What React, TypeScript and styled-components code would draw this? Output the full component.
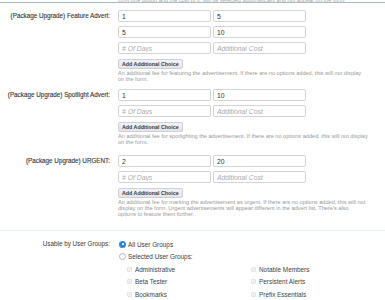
import React from 'react';
import styled, {createGlobalStyle} from 'styled-components';

const GlobalStyle = createGlobalStyle`
    body {
        margin: 0;
        background: #ffffff;
        font-family: "Liberation Sans", Arial, sans-serif;
        color: #3a3a3a;
    }
`

interface Advert {
    label: string;
    rows: [string, string][];
    desc: string;
    gapAfter: number;
}

const adverts: Advert[] = [
    {
        label: '(Package Upgrade) Feature Advert:',
        rows: [['1', '5'], ['5', '10']],
        desc: 'An additional fee for featuring the advertisement. If there are no options added, this will not display on the form.',
        gapAfter: 7,
    },
    {
        label: '(Package Upgrade) Spotlight Advert:',
        rows: [['1', '10']],
        desc: 'An additional fee for spotlighting the advertisement. If there are no options added, this will not display on the form.',
        gapAfter: 10,
    },
    {
        label: '(Package Upgrade) URGENT:',
        rows: [['2', '20']],
        desc: "An additional fee for marking the advertisement as urgent. If there are no options added, this will not display on the form. Urgent advertisements will appear different in the advert list. There's also options to feature them further.",
        gapAfter: 13,
    },
]

const groups = [
    ['Administrative', 'Notable Members'],
    ['Beta Tester', 'Persistent Alerts'],
    ['Bookmarks', 'Prefix Essentials'],
]

const App: React.FC = () => {
    return (
        <>
            <GlobalStyle/>
            <Page>
                <TopHint>
                    <span>Only one option and the cost of it, will be selected automatically and not appear on the form.</span>
                </TopHint>
                {adverts.map((a) => (
                    <FormRow key={a.label} $gapAfter={a.gapAfter}>
                        <Label>{a.label}</Label>
                        <Content>
                            <InputGrid>
                                {a.rows.map(([days, cost], i) => (
                                    <React.Fragment key={i}>
                                        <TextBox defaultValue={days}/>
                                        <TextBox defaultValue={cost}/>
                                    </React.Fragment>
                                ))}
                                <TextBox placeholder="# Of Days"/>
                                <TextBox placeholder="Additional Cost"/>
                            </InputGrid>
                            <ChoiceButton type="button">Add Additional Choice</ChoiceButton>
                            <Explain>{a.desc}</Explain>
                        </Content>
                    </FormRow>
                ))}
                <Separator/>
                <GroupRow>
                    <Label>Usable by User Groups:</Label>
                    <Content>
                        <RadioLine>
                            <RadioDot $checked/>
                            All User Groups
                        </RadioLine>
                        <RadioLine>
                            <RadioDot/>
                            Selected User Groups:
                        </RadioLine>
                        <CheckGrid>
                            {groups.flat().map((g) => (
                                <CheckLine key={g}>
                                    <CheckBox>
                                        <svg width="5" height="5" viewBox="0 0 10 10">
                                            <path d="M2 5.2 L4.2 7.4 L8.2 2.4" fill="none" stroke="#b4b4b4" strokeWidth="1.4"/>
                                        </svg>
                                    </CheckBox>
                                    {g}
                                </CheckLine>
                            ))}
                        </CheckGrid>
                    </Content>
                </GroupRow>
            </Page>
        </>
    );
}

export default App;

const Page = styled.div`
    width: 385px;
    height: 300px;
    overflow: hidden;
`

const TopHint = styled.div`
    height: 2px;
    overflow: hidden;
    padding-left: 118px;
    border-bottom: 1px solid #a9bac8;
    margin-bottom: 7px;
    span {
        display: block;
        margin-top: -3px;
        font-size: 5.6px;
        line-height: 6px;
        color: #a8a8a8;
        white-space: nowrap;
    }
`

const FormRow = styled.div<{ $gapAfter: number }>`
    display: grid;
    grid-template-columns: 110px 1fr;
    column-gap: 8px;
    margin-bottom: ${(p) => p.$gapAfter}px;
`

const Label = styled.div`
    text-align: right;
    font-size: 6.3px;
    line-height: 12px;
    color: #363636;
    white-space: nowrap;
    -webkit-text-stroke: 0.12px #363636;
`

const Content = styled.div`
    display: flex;
    flex-direction: column;
    align-items: flex-start;
`

const InputGrid = styled.div`
    display: grid;
    grid-template-columns: 93px 93px;
    column-gap: 2px;
    row-gap: 4px;
`

const TextBox = styled.input`
    box-sizing: border-box;
    width: 93px;
    height: 12px;
    margin: 0;
    padding: 0 3px;
    border: 1px solid #d4d4d4;
    border-radius: 2px;
    background: #ffffff;
    font-family: "Liberation Sans", Arial, sans-serif;
    font-size: 6.8px;
    color: #333333;
    outline: none;
    &::placeholder {
        color: #ababab;
        font-style: italic;
    }
`

const ChoiceButton = styled.button`
    margin-top: 5px;
    height: 10px;
    padding: 0 3px;
    border: 1px solid #cfd0d8;
    border-radius: 2px;
    background: linear-gradient(#f2f2f6, #e2e3ea);
    font-family: "Liberation Sans", Arial, sans-serif;
    font-size: 5.3px;
    font-weight: bold;
    color: #3a3a3a;
    line-height: 8px;
`

const Explain = styled.p`
    margin: 1px 0 0;
    width: 250px;
    font-size: 5.6px;
    line-height: 6px;
    color: #999999;
`

const Separator = styled.div`
    height: 1px;
    background: #e2eef2;
    margin-bottom: 7px;
`

const GroupRow = styled.div`
    display: grid;
    grid-template-columns: 110px 1fr;
    column-gap: 8px;
    ${Label} {
        line-height: 11px;
        -webkit-text-stroke: 0;
    }
`

const RadioLine = styled.div`
    display: flex;
    align-items: center;
    gap: 2px;
    height: 12px;
    font-size: 6.4px;
    color: #3c3c3c;
`

const RadioDot = styled.span<{ $checked?: boolean }>`
    box-sizing: border-box;
    width: 7px;
    height: 7px;
    border-radius: 50%;
    margin-left: 1px;
    background: ${(p) => (p.$checked ? '#2f86d8' : '#ffffff')};
    border: ${(p) => (p.$checked ? '2px solid #2f86d8' : '1px solid #b4b4b4')};
    position: relative;
    &::after {
        content: '';
        display: ${(p) => (p.$checked ? 'block' : 'none')};
        position: absolute;
        left: 50%;
        top: 50%;
        width: 2px;
        height: 2px;
        margin: -1px 0 0 -1px;
        border-radius: 50%;
        background: #ffffff;
    }
`

const CheckGrid = styled.div`
    display: grid;
    grid-template-columns: 124px 124px;
    margin-left: 9px;
    margin-top: 1px;
`

const CheckLine = styled.div`
    display: flex;
    align-items: center;
    gap: 3px;
    height: 12.5px;
    font-size: 6.4px;
    color: #444444;
`

const CheckBox = styled.span`
    box-sizing: border-box;
    width: 5px;
    height: 5px;
    border: 1px solid #e4e4e4;
    border-radius: 1px;
    background: #f8f8f8;
    display: flex;
    align-items: center;
    justify-content: center;
    svg {
        display: block;
    }
`
